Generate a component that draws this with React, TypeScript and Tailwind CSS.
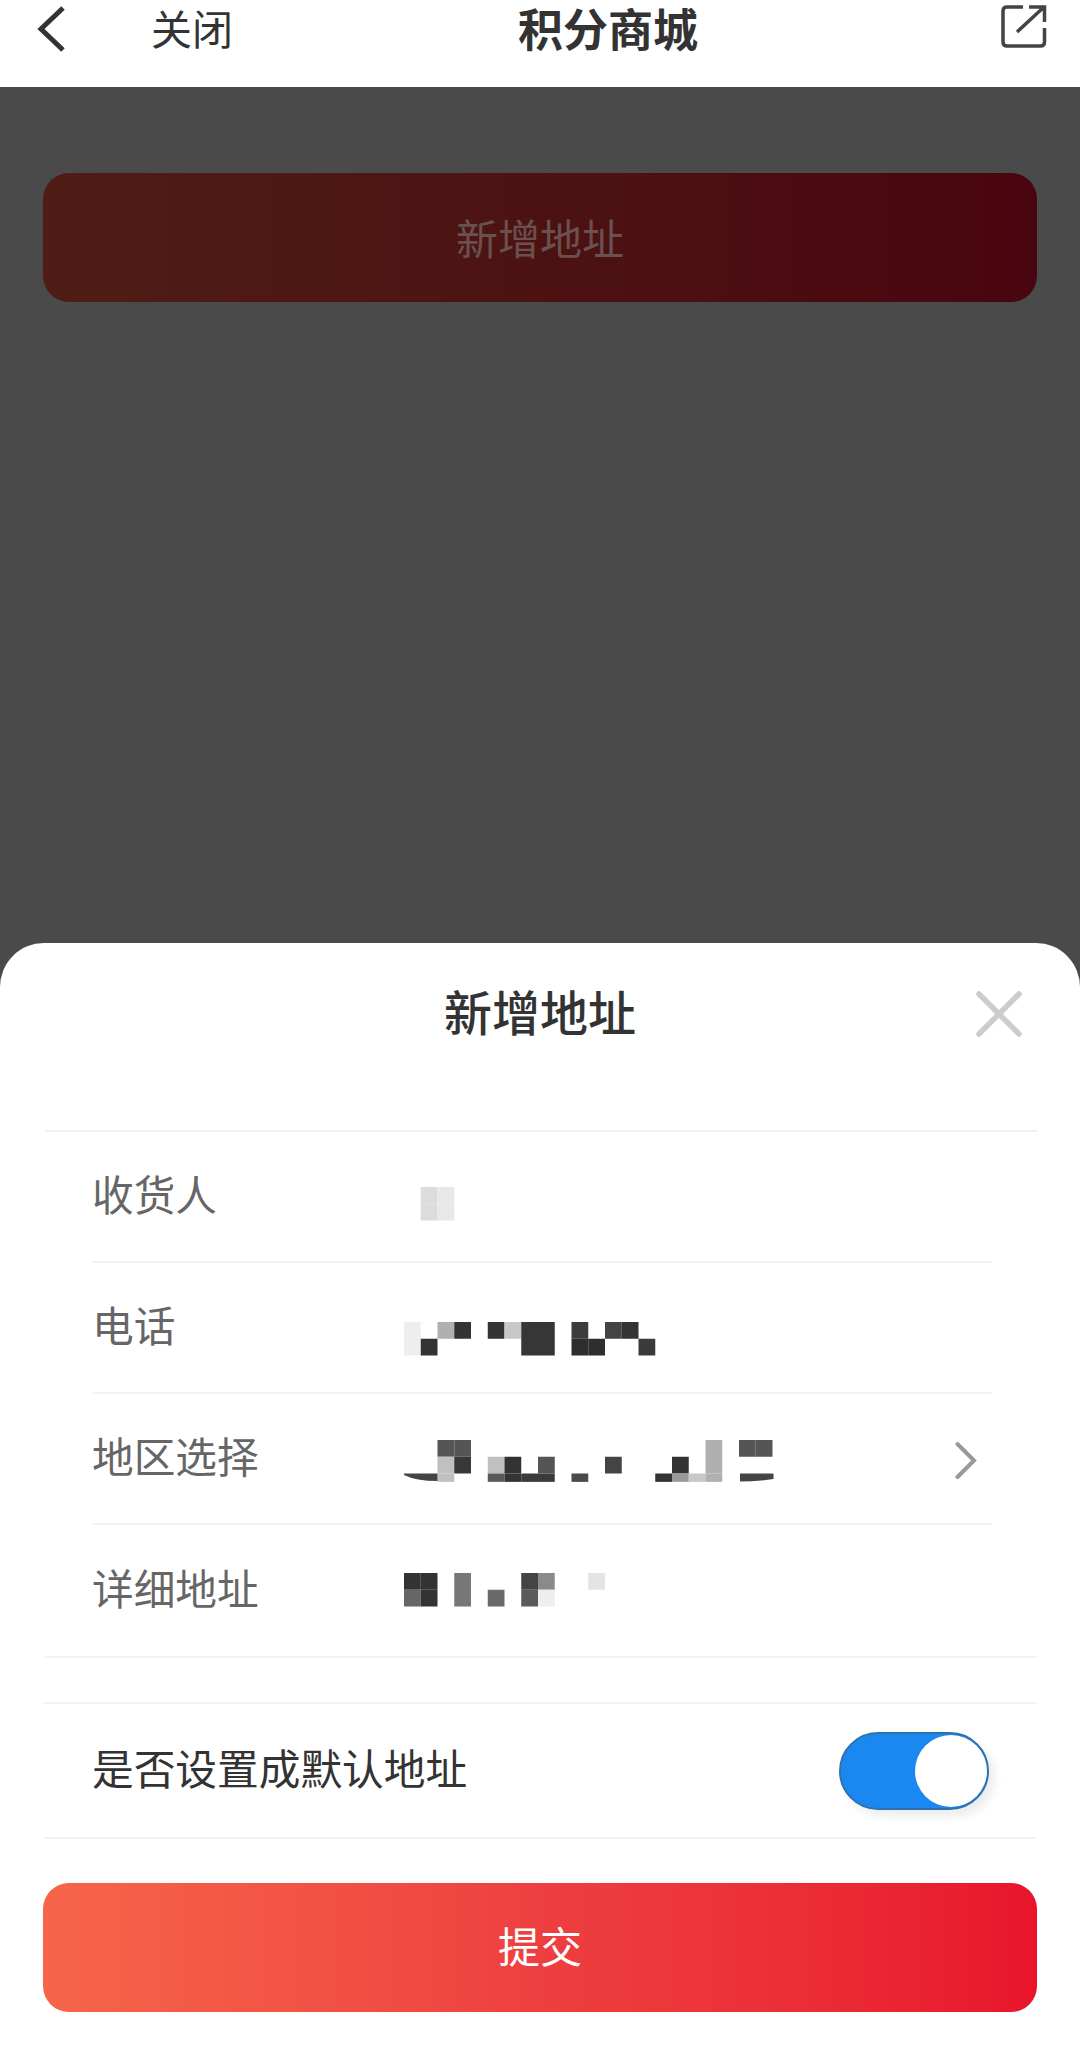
const FONT = "font-['Noto_Sans_CJK_SC','Noto_Sans',sans-serif]";

const U = 16.75;

// [column, row, colour, rows tall]
type Cell = [number, number, string, number?];

const nameCells: Cell[] = [
  [1, 0, "#dcdcdc"],
  [2, 0, "#e8e8e8"],
  [1, 1, "#dcdcdc"],
  [2, 1, "#e8e8e8"],
];

const phoneCells: Cell[] = [
  [0, 0, "#eeeeee", 2],
  [2, 0, "#b0b0b0"],
  [3, 0, "#333333"],
  [1, 1, "#333333"],
  [5, 0, "#333333"],
  [6, 0, "#c8c8c8"],
  [7, 0, "#363636", 2],
  [8, 0, "#363636", 2],
  [10, 0, "#3c3c3c"],
  [10, 1, "#2e2e2e"],
  [11, 1, "#2e2e2e"],
  [12, 0, "#444444"],
  [13, 0, "#333333"],
  [14, 1, "#3a3a3a"],
];

const regionCells: Cell[] = [
  [2, 0, "#555555"],
  [3, 0, "#555555"],
  [20, 0, "#555555"],
  [21, 0, "#555555"],
  [18, 0, "#b0b0b0", 2],
  [2, 1, "#c0c0c0"],
  [3, 1, "#383838"],
  [5, 1, "#c0c0c0"],
  [6, 1, "#333333"],
  [8, 1, "#555555"],
  [12, 1, "#444444"],
  [16, 1, "#333333"],
  [2, 2, "#c0c0c0", 0.5],
  [5, 2, "#5a5a5a", 0.5],
  [6, 2, "#333333", 0.5],
  [7, 2, "#3a3a3a", 0.5],
  [8, 2, "#3a3a3a", 0.5],
  [10, 2, "#4a4a4a", 0.5],
  [15, 2, "#333333", 0.5],
  [16, 2, "#999999", 0.5],
  [17, 2, "#c8c8c8", 0.5],
  [18, 2, "#b0b0b0", 0.5],
];

const detailCells: Cell[] = [
  [0, 0, "#333333"],
  [1, 0, "#333333"],
  [0, 1, "#666666"],
  [1, 1, "#333333"],
  [3, 0, "#777777", 2],
  [5, 1, "#6a6a6a"],
  [7, 0, "#444444"],
  [8, 0, "#8a8a8a"],
  [7, 1, "#5a5a5a"],
  [8, 1, "#eeeeee"],
  [11, 0, "#e4e4e4"],
];

function Mosaic({ cells, top, wedge }: { cells: Cell[]; top: number; wedge?: boolean }) {
  return (
    <svg width="550" height="130" className="shrink-0">
      {cells.map(([c, r, color, h], i) => (
        <rect key={i} x={c * U} y={top + r * U} width={U} height={(h ?? 1) * U} fill={color} />
      ))}
      {wedge && (
        <>
          <path d="M0 79.5 L33.5 79.5 L33.5 87 Q12 87 0 81 Z" fill="#444444" />
          <path d="M336 79.5 L369.5 79.5 L369.5 85 Q352 87.5 336 87.5 Z" fill="#444444" />
        </>
      )}
    </svg>
  );
}

function FieldRow({
  label,
  last,
  children,
}: {
  label: string;
  last?: boolean;
  children: React.ReactNode;
}) {
  return (
    <div
      className={
        last
          ? "border-b-2 border-[#f3f3f3] ml-[45px] mr-[43px] pl-[47px]"
          : "ml-[92px] mr-[88px]"
      }
    >
      <div className={last ? "flex h-[131px]" : "flex h-[131px] border-b-2 border-[#f3f3f3]"}>
        <div className="w-[312px] shrink-0 flex items-center text-[41.7px] text-[#666666] pb-[7px]">
          {label}
        </div>
        {children}
      </div>
    </div>
  );
}

export default function App() {
  return (
    <div className={`${FONT} w-[1080px] h-[2058px] flex flex-col overflow-hidden bg-white`}>
      {/* top bar */}
      <div className="h-[87px] shrink-0 flex items-start bg-white text-[#333333] pt-[3px]">
        <svg width="32" height="46" viewBox="0 0 32 46" className="ml-[36px] mt-[3px] shrink-0">
          <path d="M27 2 L5 23 L27 44" fill="none" stroke="#333333" strokeWidth="5" />
        </svg>
        <span className="ml-[83px] w-[82px] text-[41px] leading-[48px] whitespace-nowrap">关闭</span>
        <span className="ml-[285px] text-[45px] leading-[50px] font-bold whitespace-nowrap">积分商城</span>
        <svg width="50" height="48" viewBox="0 0 50 48" className="ml-auto mr-[31px] shrink-0">
          <path
            d="M24 4 H8 Q4 4 4 8 V39 Q4 43 8 43 H41.5 Q45.5 43 45.5 39 V25 M30 4 H45.5 V19 M18 29 L45 4"
            fill="none"
            stroke="#444444"
            strokeWidth="3.5"
          />
        </svg>
      </div>

      {/* dimmed page with the sheet over it */}
      <div className="flex-1 flex flex-col justify-between bg-[#4a4a4a]">
        <div className="mt-[86px] mx-[43px] h-[129px] rounded-[26px] bg-gradient-to-r from-[#4f1d16] to-[#49050f] flex items-center justify-center text-[42px] text-[#6b5050] pb-[3px]">
          新增地址
        </div>

        <div className="h-[1115px] bg-white rounded-t-[44px] flex flex-col">
          <div className="relative ml-[45px] mr-[43px] h-[189px] shrink-0 border-b-2 border-[#f0f0f0] flex justify-center pt-[39px] pr-[2px]">
            <span className="text-[48px] leading-[56px] font-medium text-[#333333]">新增地址</span>
            <svg width="46" height="46" viewBox="0 0 46 46" className="absolute left-[931px] top-[48px]">
              <path d="M3 3 L43 43 M43 3 L3 43" stroke="#cccccc" strokeWidth="5.5" strokeLinecap="round" fill="none" />
            </svg>
          </div>

          <FieldRow label="收货人">
            <Mosaic cells={nameCells} top={55} />
          </FieldRow>
          <FieldRow label="电话">
            <Mosaic cells={phoneCells} top={59} />
          </FieldRow>
          <FieldRow label="地区选择">
            <Mosaic cells={regionCells} top={46} wedge />
            <svg width="24" height="40" viewBox="0 0 24 40" className="self-center shrink-0">
              <path d="M3.5 5 L20 21.5 L3.5 38" fill="none" stroke="#999999" strokeWidth="4" strokeLinecap="round" />
            </svg>
          </FieldRow>
          <FieldRow label="详细地址" last>
            <Mosaic cells={detailCells} top={48} />
          </FieldRow>

          <div className="mt-[44px] mx-[43px] h-[137px] shrink-0 border-y-2 border-[#f2f2f2] flex items-center justify-between pl-[49px] pr-[48px]">
            <span className="text-[41.7px] text-[#333333] pb-[6px]">是否设置成默认地址</span>
            <div className="w-[150px] h-[78px] rounded-full bg-[#1b87f0] border-2 border-[#2d72ad] flex items-center justify-end shadow-[6px_6px_10px_rgba(0,0,0,0.08)]">
              <div className="w-[72px] h-[72px] rounded-full bg-white" />
            </div>
          </div>

          <div className="mt-[44px] mx-[43px] h-[129px] shrink-0 rounded-[26px] bg-gradient-to-r from-[#f6654a] via-[#ee3f40] to-[#e8142b] flex items-center justify-center text-[42px] text-white pb-[7px]">
            提交
          </div>
        </div>
      </div>
    </div>
  );
}
